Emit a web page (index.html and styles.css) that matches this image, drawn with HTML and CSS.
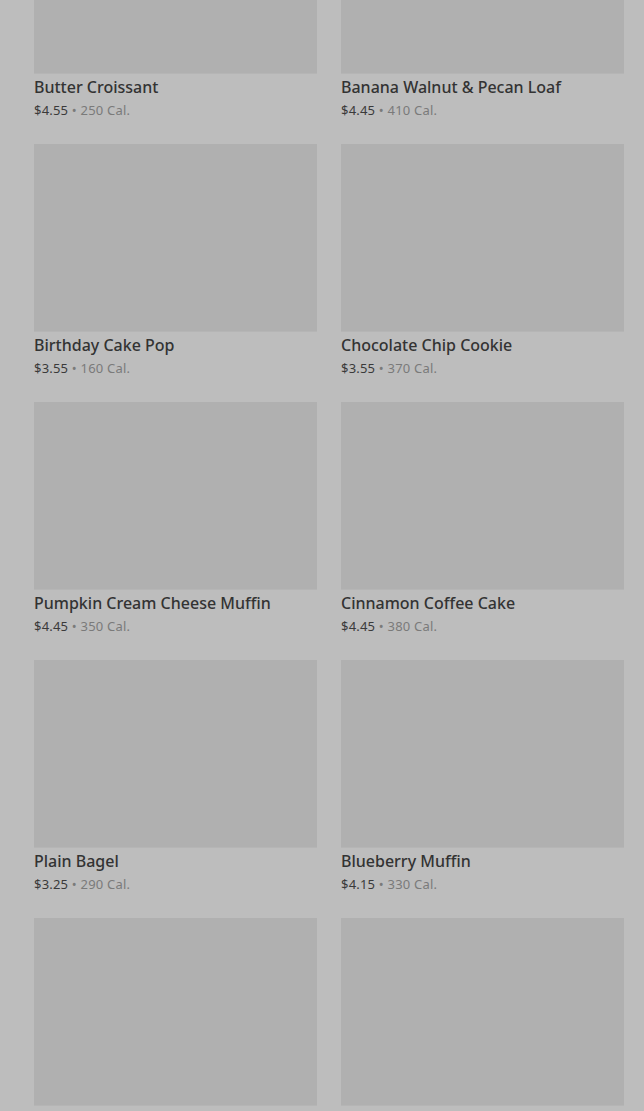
FILE: index.html
```html
<!DOCTYPE html>
<html lang="en">
<head>
<meta charset="utf-8">
<title>Menu</title>
<link rel="stylesheet" href="styles.css">
</head>
<body>
<main class="grid">
  <article class="card"><div class="img"></div><h3 class="name">Butter Croissant</h3><p class="meta"><span class="price">$4.55</span> <span class="dot">•</span> 250 Cal.</p></article>
  <article class="card"><div class="img"></div><h3 class="name">Banana Walnut &amp; Pecan Loaf</h3><p class="meta"><span class="price">$4.45</span> <span class="dot">•</span> 410 Cal.</p></article>
  <article class="card"><div class="img"></div><h3 class="name">Birthday Cake Pop</h3><p class="meta"><span class="price">$3.55</span> <span class="dot">•</span> 160 Cal.</p></article>
  <article class="card"><div class="img"></div><h3 class="name">Chocolate Chip Cookie</h3><p class="meta"><span class="price">$3.55</span> <span class="dot">•</span> 370 Cal.</p></article>
  <article class="card"><div class="img"></div><h3 class="name">Pumpkin Cream Cheese Muffin</h3><p class="meta"><span class="price">$4.45</span> <span class="dot">•</span> 350 Cal.</p></article>
  <article class="card"><div class="img"></div><h3 class="name">Cinnamon Coffee Cake</h3><p class="meta"><span class="price">$4.45</span> <span class="dot">•</span> 380 Cal.</p></article>
  <article class="card"><div class="img"></div><h3 class="name">Plain Bagel</h3><p class="meta"><span class="price">$3.25</span> <span class="dot">•</span> 290 Cal.</p></article>
  <article class="card"><div class="img"></div><h3 class="name">Blueberry Muffin</h3><p class="meta"><span class="price">$4.15</span> <span class="dot">•</span> 330 Cal.</p></article>
  <article class="card"><div class="img"></div><h3 class="name">Chocolate Croissant</h3><p class="meta"><span class="price">$4.25</span> <span class="dot">•</span> 300 Cal.</p></article>
  <article class="card"><div class="img"></div><h3 class="name">Everything Bagel</h3><p class="meta"><span class="price">$3.25</span> <span class="dot">•</span> 290 Cal.</p></article>
</main>
</body>
</html>
```

FILE: styles.css
```css
html, body {
  margin: 0;
  padding: 0;
  background: #bdbdbd;
  overflow: hidden;
}
body {
  font-family: "Noto Sans", "Liberation Sans", sans-serif;
  color: #333;
}
.grid {
  display: grid;
  grid-template-columns: 283px 283px;
  column-gap: 24px;
  row-gap: 24px;
  padding: 0 20px 0 34px;
  margin-top: -114px;
}
.card {
  margin: 0;
}
.img {
  height: 187px;
  background: #b0b0b0;
  box-shadow: 0 1px 0 rgba(0,0,0,0.04);
}
.name {
  margin: 3px 0 0;
  font-size: 16px;
  line-height: 22px;
  font-weight: 500;
  color: #333;
}
.meta {
  margin: 2px 0 0;
  font-size: 13px;
  line-height: 20px;
  letter-spacing: 0.2px;
  color: #7a7a7a;
}
.price {
  color: #3a3a3a;
}
.dot {
  color: #7a7a7a;
}
```
